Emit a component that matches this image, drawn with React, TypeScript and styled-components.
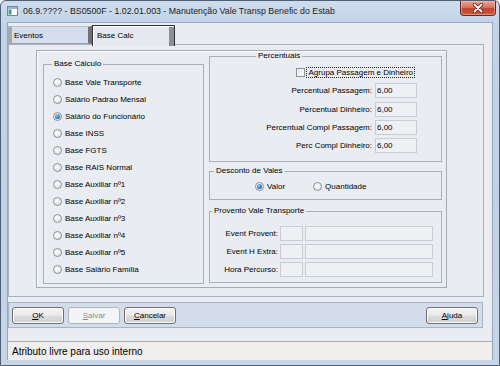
import React from "react";
import styled, { createGlobalStyle } from "styled-components";

const Global = createGlobalStyle`
  html, body { margin: 0; padding: 0; }
  body {
    width: 500px; height: 366px; overflow: hidden;
    background: #ffffff;
    font-family: "Liberation Sans", Arial, sans-serif;
  }
  * { box-sizing: border-box; }
`;

const Window = styled.div`
  width: 500px;
  height: 366px;
  border: 1px solid #4f5e72;
  border-radius: 6px 6px 0 0;
  background: linear-gradient(180deg, #cfdced 0px, #c2d4e8 22px, #bfd1e6 200px, #c6d6e8 366px);
  display: flex;
  flex-direction: column;
  padding: 0 6px 5px 6px;
`;

const TitleBar = styled.div`
  height: 21px;
  display: flex;
  align-items: flex-start;
  gap: 5px;
`;

const TitleIcon = styled.svg`
  margin-top: 5px;
  flex: none;
`;

const TitleText = styled.div`
  margin-top: 4px;
  font-size: 8.8px;
  line-height: 12px;
  color: #1b1b1b;
  white-space: nowrap;
  flex: 1;
`;

const CloseButton = styled.div`
  width: 36px;
  height: 15px;
  margin-right: -3px;
  border: 1px solid #5e2a22;
  border-top: none;
  border-radius: 0 0 4px 4px;
  background: linear-gradient(180deg, #e8a696 0%, #d9735f 45%, #c7412c 55%, #c85a40 100%);
  box-shadow: inset 0 0 0 1px rgba(255, 200, 190, 0.5);
  display: flex;
  align-items: center;
  justify-content: center;
`;

const Client = styled.div`
  flex: 1;
  border: 1px solid #95a7bd;
  border-bottom: none;
  background: #e9ecf1;
  display: flex;
  flex-direction: column;
`;

const TabStrip = styled.div`
  height: 21px;
  display: flex;
  align-items: flex-end;
  position: relative;
  z-index: 1;
`;

const Tab = styled.div<{ $active?: boolean }>`
  font-size: 8px;
  color: #000;
  display: flex;
  align-items: center;
  ${(p) =>
    p.$active
      ? `
    width: 83px;
    height: 21px;
    margin-bottom: -2px;
    padding-left: 4px;
    padding-bottom: 2px;
    background: #e5e8ee;
    border-top: 1px solid #2f3133;
    border-left: 1px solid #2f3133;
    border-right: 1px solid #2f3133;
    box-shadow: inset 1px 1px 0 #ffffff, inset -5px 0 0 #8c9094;
  `
      : `
    width: 84px;
    height: 18px;
    padding-left: 2px;
    background: #d5deec;
    border-top: 1px solid #b9c3d0;
    border-left: 4px solid #a6a9ad;
    border-right: 4px solid #6e7276;
    border-bottom: 1px solid #9aa2ad;
  `}
`;

const TabPanel = styled.div`
  height: 253px;
  margin-right: 8px;
  border: 1px solid #a9b1bc;
  background: #e9ecf1;
  padding: 5px 0 0 27px;
`;

const SubPanel = styled.div`
  width: 411px;
  height: 238px;
  border: 1px solid #a3abb6;
  box-shadow: inset 1px 1px 0 #ffffff;
  display: grid;
  grid-template-columns: 161px 233px;
  column-gap: 5px;
  padding-left: 6px;
  align-items: start;
`;

const Group = styled.fieldset<{ $h: number; $top?: number }>`
  margin: ${(p) => p.$top ?? 0}px 0 0 0;
  padding: 0;
  min-width: 0;
  height: ${(p) => p.$h}px;
  border: 1px solid #a7afba;
  display: flex;
  flex-direction: column;
`;

const Legend = styled.legend<{ $offset: number }>`
  margin-left: ${(p) => p.$offset}px;
  padding: 0 2px;
  font-size: 8px;
  line-height: 10px;
  color: #000;
`;

const RightColumn = styled.div`
  display: flex;
  flex-direction: column;
`;

const RadioList = styled.div`
  display: flex;
  flex-direction: column;
  padding: 5px 0 0 9px;
`;

const RadioRow = styled.div<{ $h?: number }>`
  height: ${(p) => p.$h ?? 17}px;
  display: flex;
  align-items: center;
  gap: 3px;
  font-size: 8px;
  color: #000;
  white-space: nowrap;
`;

const RadioCircle = styled.span`
  width: 9px;
  height: 9px;
  border-radius: 50%;
  border: 1px solid #8d9196;
  background: radial-gradient(circle at 40% 35%, #ffffff 0%, #eeeeee 50%, #cfd1d4 100%);
  display: flex;
  align-items: center;
  justify-content: center;
  flex: none;
`;

const RadioDot = styled.span`
  width: 5px;
  height: 5px;
  border-radius: 50%;
  background: radial-gradient(circle at 40% 35%, #8cd0ff 0%, #2a7fd0 55%, #0d4f96 100%);
`;

const PercBody = styled.div`
  display: grid;
  grid-template-columns: auto 42px;
  justify-content: end;
  column-gap: 3px;
  row-gap: 3.3px;
  padding: 6px 24px 0 0;
`;

const CheckRow = styled.div`
  grid-column: 1 / span 2;
  justify-self: end;
  margin-right: 2px;
  margin-bottom: 2px;
  height: 11px;
  display: flex;
  align-items: center;
  gap: 1px;
`;

const CheckBox = styled.span`
  width: 9px;
  height: 9px;
  border: 1px solid #8e9297;
  background: linear-gradient(135deg, #d9dcdf 0%, #f6f7f8 60%, #ffffff 100%);
  box-shadow: inset 0 0 0 1px #f4f4f4;
`;

const FocusLabel = styled.span`
  border: 1px dotted #222;
  padding: 0 1px;
  font-size: 8px;
  line-height: 9px;
  color: #000;
  white-space: nowrap;
`;

const FieldLabel = styled.span`
  font-size: 8px;
  line-height: 15px;
  color: #000;
  text-align: right;
  white-space: nowrap;
`;

const Input = styled.div<{ $w?: number }>`
  height: 15px;
  ${(p) => (p.$w ? `width: ${p.$w}px;` : "")}
  border: 1px solid #c8ccd3;
  background: #eef0f3;
  font-size: 8px;
  line-height: 13px;
  padding-left: 1px;
  color: #000;
`;

const DescBody = styled.div`
  display: flex;
  gap: 28px;
  padding: 5px 0 0 45px;
`;

const ProvBody = styled.div`
  display: grid;
  grid-template-columns: 64px 23px 128px;
  column-gap: 2px;
  row-gap: 3px;
  padding: 10px 0 0 4px;
`;

const ButtonBar = styled.div`
  margin: 5px 9px 0 0;
  height: 26px;
  border: 1px solid #a8b4c4;
  background: #d3dcea;
  display: flex;
  align-items: center;
  gap: 4px;
  padding: 0 4px 0 3px;
`;

const Spacer = styled.div`
  flex: 1;
`;

const Button = styled.div<{ $disabled?: boolean }>`
  width: 52px;
  height: 17px;
  border-radius: 3px;
  border: 1px solid ${(p) => (p.$disabled ? "#b2b6ba" : "#707070")};
  background: ${(p) =>
    p.$disabled
      ? "#f3f4f5"
      : "linear-gradient(180deg, #f3f3f3 0%, #ebebeb 48%, #dddddd 52%, #cfcfcf 100%)"};
  box-shadow: ${(p) => (p.$disabled ? "none" : "inset 0 0 0 1px #fbfbfb")};
  display: flex;
  align-items: center;
  justify-content: center;
  font-size: 8px;
  color: ${(p) => (p.$disabled ? "#8d8d8d" : "#000")};
  u { text-decoration-thickness: 1px; text-underline-offset: 1px; }
`;

const StatusBar = styled.div`
  margin-top: auto;
  height: 19px;
  border-top: 1px solid #a7a9ac;
  background: #f0efed;
  display: flex;
  align-items: center;
  padding-left: 4px;
  font-size: 10px;
  color: #000;
`;

const baseItems = [
  "Base Vale Transporte",
  "Salário Padrao Mensal",
  "Salário do Funcionário",
  "Base INSS",
  "Base FGTS",
  "Base RAIS Normal",
  "Base Auxiliar nº1",
  "Base Auxiliar nº2",
  "Base Auxiliar nº3",
  "Base Auxiliar nº4",
  "Base Auxiliar nº5",
  "Base Salário Família",
];

const percRows = [
  "Percentual Passagem:",
  "Percentual Dinheiro:",
  "Percentual Compl Passagem:",
  "Perc Compl Dinheiro:",
];

const provRows = ["Event Provent:", "Event H Extra:", "Hora Percurso:"];

const Radio = ({ label, checked, h }: { label: string; checked?: boolean; h?: number }) => (
  <RadioRow $h={h}>
    <RadioCircle>{checked && <RadioDot />}</RadioCircle>
    <span>{label}</span>
  </RadioRow>
);

export default function App() {
  return (
    <>
      <Global />
      <Window>
        <TitleBar>
          <TitleIcon width="11" height="10" viewBox="0 0 11 10">
            <rect x="0.5" y="0.5" width="10" height="9" fill="#ffffff" stroke="#7d8792" />
            <rect x="1" y="1" width="9" height="2" fill="#9bb5d4" />
            <rect x="1.5" y="3.5" width="3" height="5" fill="#3c9a8c" />
          </TitleIcon>
          <TitleText>06.9.???? - BS0500F - 1.02.01.003 - Manutenção Vale Transp Benefic do Estab</TitleText>
          <CloseButton>
            <svg width="12" height="10" viewBox="0 0 12 10">
              <path d="M2.5 1.5 L9.5 8.5 M9.5 1.5 L2.5 8.5" stroke="#5a2018" strokeWidth="3.4" strokeLinecap="round" />
              <path d="M2.5 1.5 L9.5 8.5 M9.5 1.5 L2.5 8.5" stroke="#ffffff" strokeWidth="1.8" strokeLinecap="round" />
            </svg>
          </CloseButton>
        </TitleBar>
        <Client>
          <TabStrip>
            <Tab>Eventos</Tab>
            <Tab $active>Base Calc</Tab>
          </TabStrip>
          <TabPanel>
            <SubPanel>
              <Group $h={225} $top={8}>
                <Legend $offset={8}>Base Cálculo</Legend>
                <RadioList>
                  {baseItems.map((it, i) => (
                    <Radio key={it} label={it} checked={i === 2} />
                  ))}
                </RadioList>
              </Group>
              <RightColumn>
                <Group $h={111}>
                  <Legend $offset={46}>Percentuais</Legend>
                  <PercBody>
                    <CheckRow>
                      <CheckBox />
                      <FocusLabel>Agrupa Passagem e Dinheiro</FocusLabel>
                    </CheckRow>
                    {percRows.map((r) => (
                      <React.Fragment key={r}>
                        <FieldLabel>{r}</FieldLabel>
                        <Input>6,00</Input>
                      </React.Fragment>
                    ))}
                  </PercBody>
                </Group>
                <Group $h={34} $top={4}>
                  <Legend $offset={4}>Desconto de Vales</Legend>
                  <DescBody>
                    <Radio label="Valor" checked h={10} />
                    <Radio label="Quantidade" h={10} />
                  </DescBody>
                </Group>
                <Group $h={77} $top={6}>
                  <Legend $offset={2}>Provento Vale Transporte</Legend>
                  <ProvBody>
                    {provRows.map((r) => (
                      <React.Fragment key={r}>
                        <FieldLabel>{r}</FieldLabel>
                        <Input />
                        <Input />
                      </React.Fragment>
                    ))}
                  </ProvBody>
                </Group>
              </RightColumn>
            </SubPanel>
          </TabPanel>
          <ButtonBar>
            <Button><span><u>O</u>K</span></Button>
            <Button $disabled><span><u>S</u>alvar</span></Button>
            <Button><span><u>C</u>ancelar</span></Button>
            <Spacer />
            <Button><span><u>A</u>juda</span></Button>
          </ButtonBar>
          <StatusBar>Atributo livre para uso interno</StatusBar>
        </Client>
      </Window>
    </>
  );
}
